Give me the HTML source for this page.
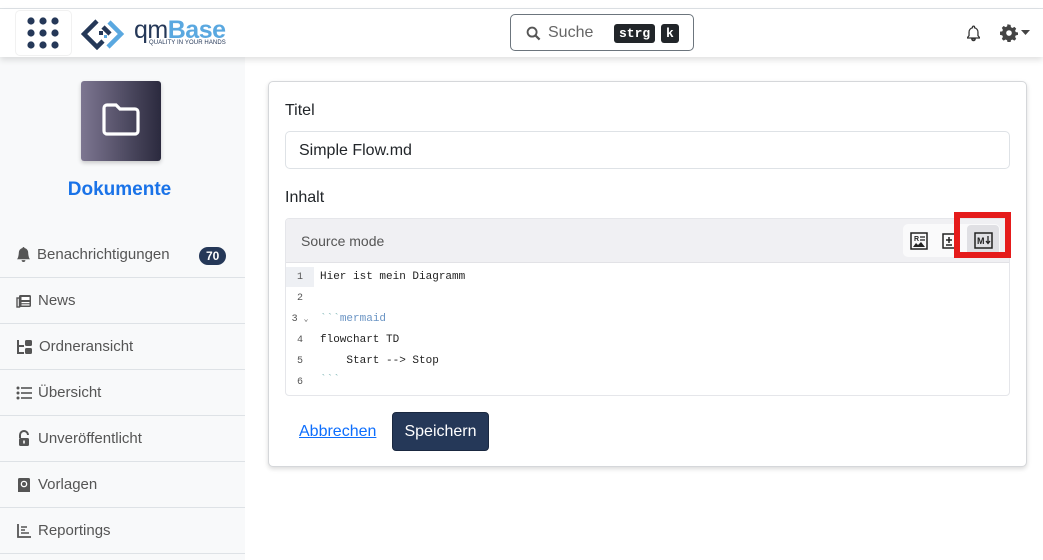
<!DOCTYPE html>
<html><head><meta charset="utf-8"><style>
*{box-sizing:border-box;margin:0;padding:0}
body{width:1043px;height:560px;overflow:hidden;background:#fff;font-family:"Liberation Sans","DejaVu Sans",sans-serif;color:#212529;position:relative}
.top{position:absolute;left:0;top:0;width:1043px;height:9px;border-bottom:1px solid #dee2e6;background:#fff}
.hdr{position:absolute;top:9px;left:0;width:1043px;height:48px;background:#fff;box-shadow:0 3px 6px rgba(0,0,0,.12);z-index:2}
.side{position:absolute;left:0;top:57px;width:245px;height:503px;background:#f8f9fa}
.nav{position:absolute;left:0;width:245px;height:46px;border-bottom:1px solid #dee2e6;font-size:15px;color:#555;display:flex;align-items:center;padding-left:16px}
.nav svg{margin-right:6px}
.card{position:absolute;left:268px;top:81px;width:759px;height:386px;border:1px solid #d5d7da;border-radius:5px;box-shadow:0 2px 5px rgba(0,0,0,.15);background:#fff}
.mono{font-family:"Liberation Mono","DejaVu Sans Mono",monospace;font-size:11px}
.ln{position:absolute;left:0;width:28px;text-align:center;color:#555;font-size:10px}
.cd{position:absolute;left:34px;color:#222;white-space:pre}
</style></head><body>
<div class="top"></div>
<div class="hdr">
 <div style="position:absolute;left:15px;top:1px;width:57px;height:46px;border:1px solid #f1f1f1;border-radius:5px"></div>
 <svg style="position:absolute;left:26px;top:7px" width="34" height="34" viewBox="0 0 34 34" fill="#253858">
  <circle cx="5" cy="5" r="3.6"/><circle cx="17" cy="5" r="3.6"/><circle cx="29" cy="5" r="3.6"/>
  <circle cx="5" cy="17" r="3.6"/><circle cx="17" cy="17" r="3.6"/><circle cx="29" cy="17" r="3.6"/>
  <circle cx="5" cy="29" r="3.6"/><circle cx="17" cy="29" r="3.6"/><circle cx="29" cy="29" r="3.6"/>
 </svg>
 <svg style="position:absolute;left:81px;top:9px" width="50" height="32" viewBox="0 0 50 32">
  <path d="M16 3 L3 16 L16 29 L22 23" stroke="#253858" stroke-width="4.5" fill="none"/>
  <path d="M22 9 L29 16" stroke="#253858" stroke-width="4.5"/>
  <path d="M28 4 L40 16 L27 29" stroke="#5aa8e0" stroke-width="4.5" fill="none"/>
  <rect x="18" y="13" width="4" height="4" fill="#253858"/><rect x="23" y="17" width="3" height="3" fill="#5aa8e0"/>
 </svg>
 <div style="position:absolute;left:134px;top:7px;font-size:25px;font-weight:bold;letter-spacing:-.5px"><span style="color:#253858;font-weight:normal">qm</span><span style="color:#5aa8e0">Base</span></div>
 <div style="position:absolute;left:149px;top:31px;font-size:6px;color:#253858;letter-spacing:.1px">QUALITY IN YOUR HANDS</div>
 <div style="position:absolute;left:510px;top:5px;width:184px;height:37px;border:1px solid #6c757d;border-radius:5px">
  <svg style="position:absolute;left:15px;top:11px" width="15" height="15" viewBox="0 0 16 16"><circle cx="6.5" cy="6.5" r="4.8" stroke="#555" stroke-width="2" fill="none"/><path d="M10 10 L14.5 14.5" stroke="#555" stroke-width="2.4"/></svg>
  <span style="position:absolute;left:37px;top:9px;font-size:16px;color:#666">Suche</span>
  <span class="mono" style="position:absolute;left:103px;top:9px;background:#212529;color:#fff;border-radius:3px;padding:2px 5px;font-size:13px;font-weight:bold">strg</span>
  <span class="mono" style="position:absolute;left:150px;top:9px;background:#212529;color:#fff;border-radius:3px;padding:2px 5px;font-size:13px;font-weight:bold">k</span>
 </div>
 <svg style="position:absolute;left:965px;top:15px" width="17" height="18" viewBox="0 0 16 16"><path d="M8 1.5a1 1 0 0 1 1 1v.6a4.3 4.3 0 0 1 3.2 4.2v3.2l1.3 1.6v.6H2.5v-.6l1.3-1.6V7.3A4.3 4.3 0 0 1 7 3.1v-.6a1 1 0 0 1 1-1zM6.4 13.6h3.2a1.6 1.6 0 0 1-3.2 0z" fill="none" stroke="#333" stroke-width="1.2"/></svg>
 <svg style="position:absolute;left:1000px;top:15px" width="18" height="18" viewBox="0 0 16 16"><path d="M8 0.5l1.4.3.3 2 1.3.7 1.8-1 1.6 1.6-1 1.8.6 1.3 2 .3v2.2l-2 .4-.6 1.3 1 1.8-1.6 1.6-1.8-1-1.3.6-.3 2H6.7l-.4-2-1.300-.6-1.8 1-1.6-1.6 1-1.8-.6-1.3-2-.4V6.8l2-.3.6-1.3-1-1.8 1.6-1.6 1.8 1 1.3-.7.4-2z" fill="#444"/><circle cx="8" cy="8" r="2.5" fill="#fff"/></svg>
 <svg style="position:absolute;left:1021px;top:21px" width="9" height="6" viewBox="0 0 9 6"><path d="M0 0h9L4.5 5z" fill="#444"/></svg>
</div>
<div class="side">
 <div style="position:absolute;left:81px;top:24px;width:80px;height:80px;border-radius:3px;background:linear-gradient(90deg,#7d7691,#2b2a3e);box-shadow:0 2px 4px rgba(0,0,0,.2)"></div>
 <svg style="position:absolute;left:101px;top:45px" width="40" height="36" viewBox="0 0 40 36"><path d="M3 6a3 3 0 0 1 3-3h9l4 4h15a3 3 0 0 1 3 3v19a3 3 0 0 1-3 3H6a3 3 0 0 1-3-3z" fill="none" stroke="#fff" stroke-width="3.2"/></svg>
 <div style="position:absolute;left:-3px;width:245px;top:122px;text-align:center;font-size:19px;font-weight:bold;color:#1a73e8">Dokumente</div>
</div>
<div class="nav" style="top:232px"><svg width="15" height="15" viewBox="0 0 16 16"><path d="M8 16a2 2 0 0 0 2-2H6a2 2 0 0 0 2 2zm.995-14.901a1 1 0 1 0-1.990 0A5 5 0 0 0 3 6c0 1.098-.5 6-2 7h14c-1.5-1-2-5.902-2-7 0-2.420-1.720-4.440-4.005-4.901z" fill="#555"/></svg>Benachrichtigungen<span style="position:absolute;left:199px;top:15px;background:#253858;color:#fff;font-size:12px;font-weight:bold;border-radius:9px;padding:2px 7px">70</span></div>
<div class="nav" style="top:278px"><svg width="16" height="14" viewBox="0 0 16 14"><rect x="3" y="1" width="12" height="12" rx="1.5" fill="#555"/><rect x="1" y="4" width="2.5" height="9" fill="none" stroke="#555" stroke-width="1.4"/><rect x="5.5" y="3" width="8" height="3" fill="#fff"/><rect x="5.5" y="8" width="8" height="1.2" fill="#fff"/><rect x="5.5" y="10.3" width="8" height="1.2" fill="#fff"/></svg>News</div>
<div class="nav" style="top:324px"><svg width="17" height="16" viewBox="0 0 17 16"><path d="M2 1v13h6M2 7h6" stroke="#555" stroke-width="2" fill="none"/><rect x="9" y="1" width="7" height="6" rx="1.5" fill="#555"/><rect x="9" y="9" width="7" height="6" rx="1.5" fill="#555"/></svg>Ordneransicht</div>
<div class="nav" style="top:370px"><svg width="16" height="14" viewBox="0 0 16 14"><g fill="#555"><circle cx="2" cy="2" r="1.5"/><circle cx="2" cy="7" r="1.5"/><circle cx="2" cy="12" r="1.5"/><rect x="5" y="1.2" width="11" height="1.6"/><rect x="5" y="6.2" width="11" height="1.6"/><rect x="5" y="11.2" width="11" height="1.6"/></g></svg>Übersicht</div>
<div class="nav" style="top:416px"><svg width="16" height="17" viewBox="0 0 16 17"><path d="M4 8V5a4 4 0 0 1 8 0" stroke="#555" stroke-width="2" fill="none"/><rect x="3" y="8" width="10" height="8" rx="1.5" fill="#555"/><rect x="7.2" y="10.5" width="1.6" height="3" fill="#fff"/></svg>Unveröffentlicht</div>
<div class="nav" style="top:462px"><svg width="16" height="16" viewBox="0 0 16 16"><rect x="2" y="1" width="12" height="13" rx="1.5" fill="#555"/><circle cx="8" cy="7" r="3.3" fill="#fff"/><circle cx="8" cy="7" r="2" fill="#555"/><rect x="2" y="13" width="12" height="2" fill="#555"/></svg>Vorlagen</div>
<div class="nav" style="top:508px"><svg width="16" height="16" viewBox="0 0 16 16"><path d="M2 1v13h13" stroke="#555" stroke-width="1.8" fill="none"/><path d="M5 4h6M5 7h4M5 10h8" stroke="#555" stroke-width="1.6"/></svg>Reportings</div>
<div class="card">
 <div style="position:absolute;left:16px;top:20px;font-size:16px">Titel</div>
 <div style="position:absolute;left:16px;top:49px;width:725px;height:38px;border:1px solid #dee2e6;border-radius:5px;padding:10px 13px;font-size:16px">Simple Flow.md</div>
 <div style="position:absolute;left:16px;top:107px;font-size:16px">Inhalt</div>
 <div style="position:absolute;left:16px;top:136px;width:725px;height:178px;border:1px solid #e5e6ea;border-radius:4px;overflow:hidden">
  <div style="height:44px;background:#f0f0f3;border-bottom:1px solid #e2e2e6;position:relative">
   <span style="position:absolute;left:15px;top:14px;font-size:14px;color:#555">Source mode</span>
   <div style="position:absolute;left:617px;top:5px;width:97px;height:33px;background:#fafafb;border-radius:5px"></div>
   <div style="position:absolute;left:681px;top:6px;width:32px;height:31px;background:#e0e0e4;border-radius:4px"></div>
   <svg style="position:absolute;left:624px;top:13px" width="18" height="18" viewBox="0 0 18 18"><rect x="1" y="1" width="16" height="16" fill="none" stroke="#222" stroke-width="1.5"/><text x="4" y="9" font-size="7" font-family="Liberation Sans" font-weight="bold" fill="#222">R</text><path d="M10 5h5M10 8h5" stroke="#222" stroke-width="1.3"/><path d="M3 15l3-4 2 2 3-3 4 5z" fill="#222"/></svg>
   <svg style="position:absolute;left:656px;top:14px" width="14" height="16" viewBox="0 0 14 16"><path d="M12 1H1v14h11" fill="none" stroke="#222" stroke-width="1.5"/><path d="M7 4v6M4 7h6M4 12h6" stroke="#222" stroke-width="1.5"/></svg>
   <svg style="position:absolute;left:688px;top:13px" width="19" height="17" viewBox="0 0 19 17"><rect x="1" y="1" width="17" height="15" fill="none" stroke="#222" stroke-width="1.5"/><text x="3" y="12" font-size="9" font-family="Liberation Sans" font-weight="bold" fill="#222">M</text><path d="M14 4v7M12 9l2 2.5 2-2.5" stroke="#222" stroke-width="1.3" fill="none"/></svg>
  </div>
  <div class="mono" style="position:relative;height:134px">
   <div style="position:absolute;left:0;top:4px;width:28px;height:20px;background:#eef0f4"></div>
   <div class="ln" style="top:9px">1</div><div class="cd" style="top:8px">Hier ist mein Diagramm</div>
   <div class="ln" style="top:30px">2</div>
   <div class="ln" style="top:51px">3 <span style="font-size:8px">&#8964;</span></div><div class="cd" style="top:50px;color:#6a94c4"><span style="color:#8bb">&#96;&#96;&#96;</span>mermaid</div>
   <div class="ln" style="top:72px">4</div><div class="cd" style="top:71px">flowchart TD</div>
   <div class="ln" style="top:93px">5</div><div class="cd" style="top:92px">    Start --&gt; Stop</div>
   <div class="ln" style="top:114px">6</div><div class="cd" style="top:111px;color:#8bb">&#96;&#96;&#96;</div>
  </div>
 </div>
 <div style="position:absolute;left:30px;top:341px;font-size:16px;color:#0d6efd;text-decoration:underline">Abbrechen</div>
 <div style="position:absolute;left:123px;top:330px;width:97px;height:39px;background:#253858;border-radius:4px;color:#fff;font-size:16px;text-align:center;line-height:37px;border:1px solid #1a2840">Speichern</div>
</div>
<div style="position:absolute;left:954px;top:212px;width:57px;height:46px;border:6px solid #e51b1b"></div>
</body></html>
